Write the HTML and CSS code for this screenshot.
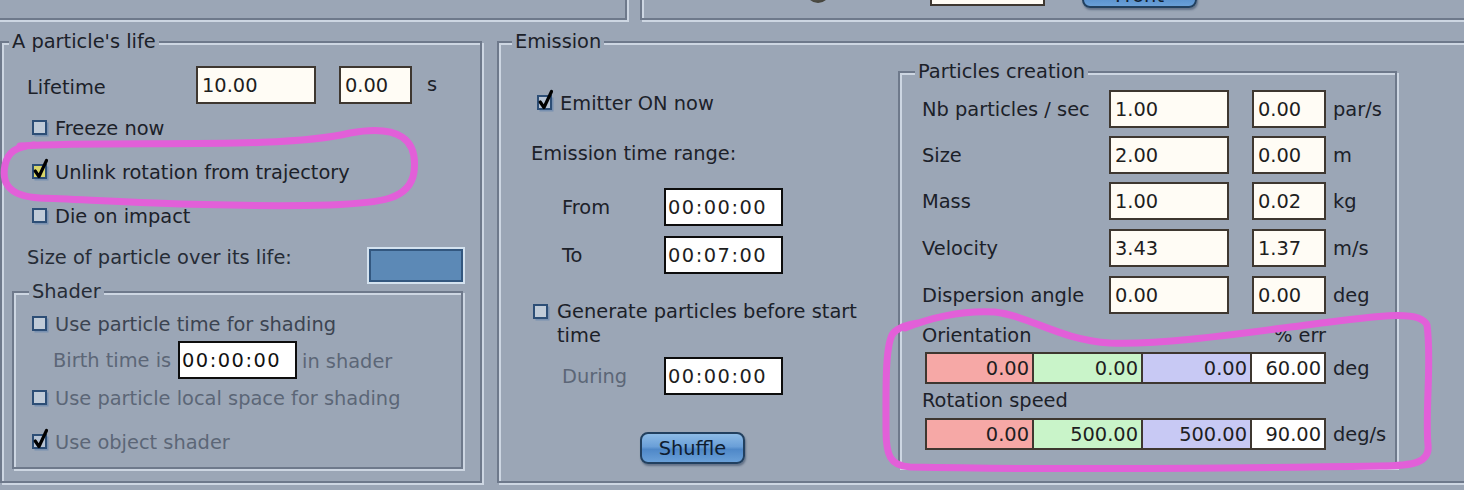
FILE: index.html
```html
<!DOCTYPE html>
<html>
<head>
<meta charset="utf-8">
<title>Particles</title>
<link rel="stylesheet" href="styles.css">
</head>
<body>
<div class="page">
<div class="topbar">
  <div class="top-left etched"></div>
  <div class="top-right etched">
    <span class="knob"></span>
    <span class="field top-field">0.00</span>
    <span class="btn front">Front</span>
  </div>
</div>

<div class="main">
  <section class="group life etched">
    <div class="legend">A particle's life</div>
    <div class="lifetime-row">
      <span class="life-lbl">Lifetime</span>
      <span class="field f-life">10.00</span>
      <span class="field f-life-err">0.00</span>
      <span class="life-unit">s</span>
    </div>
    <div class="check-row life-check first">
      <svg class="cb" width="16" height="16" viewBox="0 0 16 16"><rect x="2.5" y="2.5" width="14" height="14" fill="#7890b0"/><rect x="1" y="1" width="13" height="13" fill="#c0cbd8" stroke="#2d4e76" stroke-width="2"/></svg>
      <span>Freeze now</span>
    </div>
    <div class="check-row life-check">
      <svg class="cb" width="16" height="16" viewBox="0 0 16 16"><rect x="2.5" y="2.5" width="14" height="14" fill="#7890b0"/><rect x="1" y="1" width="13" height="13" fill="#d9d66a" stroke="#2d4e76" stroke-width="2"/><path d="M3.2 7 L7 12.5 L14.5 -3.5" fill="none" stroke="#000" stroke-width="3.2" stroke-linejoin="round" stroke-linecap="round"/></svg>
      <span>Unlink rotation from trajectory</span>
    </div>
    <div class="check-row life-check">
      <svg class="cb" width="16" height="16" viewBox="0 0 16 16"><rect x="2.5" y="2.5" width="14" height="14" fill="#7890b0"/><rect x="1" y="1" width="13" height="13" fill="#c0cbd8" stroke="#2d4e76" stroke-width="2"/></svg>
      <span>Die on impact</span>
    </div>
    <div class="size-row">
      <span class="size-lbl">Size of particle over its life:</span>
      <span class="swatch"></span>
    </div>

    <section class="group shader etched">
      <div class="legend">Shader</div>
      <div class="check-row shader-check first dim">
        <svg class="cb" width="16" height="16" viewBox="0 0 16 16"><rect x="2.5" y="2.5" width="14" height="14" fill="#7890b0"/><rect x="1" y="1" width="13" height="13" fill="#c0cbd8" stroke="#2d4e76" stroke-width="2"/></svg>
        <span>Use particle time for shading</span>
      </div>
      <div class="birth-row muted">
        <span class="birth-lbl">Birth time is</span>
        <span class="field time">00:00:00</span>
        <span class="birth-after">in shader</span>
      </div>
      <div class="check-row shader-check local muted">
        <svg class="cb" width="16" height="16" viewBox="0 0 16 16"><rect x="2.5" y="2.5" width="14" height="14" fill="#7890b0"/><rect x="1" y="1" width="13" height="13" fill="#c0cbd8" stroke="#2d4e76" stroke-width="2"/></svg>
        <span>Use particle local space for shading</span>
      </div>
      <div class="check-row shader-check object muted">
        <svg class="cb" width="16" height="16" viewBox="0 0 16 16"><rect x="2.5" y="2.5" width="14" height="14" fill="#7890b0"/><rect x="1" y="1" width="13" height="13" fill="#b6c3d4" stroke="#2d4e76" stroke-width="2"/><path d="M3.2 7 L7 12.5 L14.5 -3.5" fill="none" stroke="#000" stroke-width="3.2" stroke-linejoin="round" stroke-linecap="round"/></svg>
        <span>Use object shader</span>
      </div>
    </section>
  </section>

  <section class="group emission etched">
    <div class="legend">Emission</div>
    <div class="em-body">
      <div class="em-left">
        <div class="check-row emitter">
          <svg class="cb" width="16" height="16" viewBox="0 0 16 16"><rect x="2.5" y="2.5" width="14" height="14" fill="#7890b0"/><rect x="1" y="1" width="13" height="13" fill="#b6c3d4" stroke="#2d4e76" stroke-width="2"/><path d="M3.2 7 L7 12.5 L14.5 -3.5" fill="none" stroke="#000" stroke-width="3.2" stroke-linejoin="round" stroke-linecap="round"/></svg>
          <span>Emitter ON now</span>
        </div>
        <div class="em-range">Emission time range:</div>
        <div class="time-row from">
          <span class="time-lbl">From</span>
          <span class="field time">00:00:00</span>
        </div>
        <div class="time-row to">
          <span class="time-lbl">To</span>
          <span class="field time">00:07:00</span>
        </div>
        <div class="gen-row">
          <svg class="cb" width="16" height="16" viewBox="0 0 16 16"><rect x="2.5" y="2.5" width="14" height="14" fill="#7890b0"/><rect x="1" y="1" width="13" height="13" fill="#c0cbd8" stroke="#2d4e76" stroke-width="2"/></svg>
          <span class="gen-text">Generate particles before start time</span>
        </div>
        <div class="time-row during">
          <span class="time-lbl muted">During</span>
          <span class="field time">00:00:00</span>
        </div>
        <span class="btn shuffle">Shuffle</span>
      </div>

      <section class="group pc etched">
        <div class="legend">Particles creation</div>
        <div class="pc-row first">
          <span class="pc-lbl">Nb particles / sec</span>
          <span class="field f-main">1.00</span>
          <span class="field f-err">0.00</span>
          <span class="unit">par/s</span>
        </div>
        <div class="pc-row">
          <span class="pc-lbl">Size</span>
          <span class="field f-main">2.00</span>
          <span class="field f-err">0.00</span>
          <span class="unit">m</span>
        </div>
        <div class="pc-row">
          <span class="pc-lbl">Mass</span>
          <span class="field f-main">1.00</span>
          <span class="field f-err">0.02</span>
          <span class="unit">kg</span>
        </div>
        <div class="pc-row wide">
          <span class="pc-lbl">Velocity</span>
          <span class="field f-main">3.43</span>
          <span class="field f-err">1.37</span>
          <span class="unit">m/s</span>
        </div>
        <div class="pc-row wide">
          <span class="pc-lbl">Dispersion angle</span>
          <span class="field f-main">0.00</span>
          <span class="field f-err">0.00</span>
          <span class="unit">deg</span>
        </div>
        <div class="axis-hdr">
          <span>Orientation</span>
          <span>% err</span>
        </div>
        <div class="rgb-row">
          <div class="rgb">
            <span class="ax-x">0.00</span>
            <span class="ax-y">0.00</span>
            <span class="ax-z">0.00</span>
            <span class="ax-e">60.00</span>
          </div>
          <span class="unit">deg</span>
        </div>
        <div class="axis-hdr second">
          <span>Rotation speed</span>
        </div>
        <div class="rgb-row second">
          <div class="rgb">
            <span class="ax-x">0.00</span>
            <span class="ax-y">500.00</span>
            <span class="ax-z">500.00</span>
            <span class="ax-e">90.00</span>
          </div>
          <span class="unit">deg/s</span>
        </div>
      </section>
    </div>
  </section>
</div>

<svg class="marks" width="1464" height="490" viewBox="0 0 1464 490">
  <path d="M20 146 C120 140, 280 150, 350 133 C400 124, 418 140, 414 172 C410 200, 380 203, 330 205 C220 208, 100 200, 40 198 C5 196, 2 180, 5 165 C8 152, 15 147, 34 145"/>
  <path d="M905 328 C930 318, 960 310, 995 312 C1030 316, 1060 340, 1110 343 C1170 345, 1250 332, 1330 322 C1380 316, 1420 310, 1427 325 C1432 360, 1425 410, 1428 445 C1430 462, 1415 466, 1380 466 C1250 468, 1050 470, 910 467 C890 466, 886 455, 886 430 C886 390, 885 350, 892 335 C896 328, 905 325, 918 323"/>
</svg>
</div>
</body>
</html>
```

FILE: styles.css
```css
* { box-sizing: border-box; }

html {
  overflow: hidden;
  background: #9ba6b6;
}

body {
  margin: 0;
  background: #9ba6b6;
  font-family: "DejaVu Sans", "Liberation Sans", sans-serif;
  font-size: 19.4px;
  color: #1c2129;
}

.page {
  width: 1464px;
  height: 490px;
  overflow: hidden;
  position: relative;
}

.etched {
  border: 2px solid #6e798b;
  box-shadow: inset 2px 2px 0 #cdd6e2, 2px 2px 0 #cdd6e2;
}

/* top strip (panels cut by the window edge) */
.topbar {
  display: flex;
  height: 60px;
  margin-top: -40px;
}
.top-left {
  flex: none;
  width: 637px;
  margin-left: -10px;
}
.top-right {
  flex: none;
  width: 860px;
  margin-left: 13px;
  display: flex;
  align-items: flex-end;
  padding-left: 164px;
}
.knob {
  flex: none;
  width: 24px;
  height: 24px;
  border-radius: 50%;
  background: radial-gradient(circle at 40% 35%, #7c7b70, #46453e 70%);
  margin-bottom: 15px;
}
.top-field {
  width: 115px;
  height: 36px !important;
  margin: 0 0 12px 100px;
  align-items: flex-end !important;
  padding-bottom: 10px !important;
  color: #333;
}
.front {
  width: 115px;
  height: 32px;
  margin: 0 0 10px 37px;
  padding-top: 6px;
  background: linear-gradient(#8dbcee, #5f98da 50%, #4f8ad0 55%, #6aa4e4);
}

/* layout */
.main {
  display: flex;
  align-items: flex-start;
  margin-top: 21px;
}
.group {
  display: flex;
  flex-direction: column;
  flex: none;
}
.legend {
  align-self: flex-start;
  height: 22px;
  line-height: 22px;
  padding: 0 3px;
  margin-top: -12px;
  background: #9ba6b6;
  white-space: nowrap;
}

/* common widgets */
.field {
  flex: none;
  display: flex;
  align-items: center;
  height: 38px;
  padding: 0 4px;
  border: 2px solid #3e3730;
  background: #fffcf5;
  color: #1e1e1e;
  white-space: nowrap;
}
.field.time {
  width: 119px;
  padding: 0 2px;
  border-color: #0d0d0d;
  background: #ffffff;
  letter-spacing: 1.5px;
}
.btn {
  flex: none;
  display: flex;
  align-items: center;
  justify-content: center;
  border: 2px solid #22405f;
  border-radius: 8px;
  background: linear-gradient(#8dbbe6, #6a9fd8 45%, #4f88c8 55%, #6aa0d8);
  color: #0f1d30;
  box-shadow: 1px 2px 2px rgba(30, 50, 80, 0.45);
}
.cb {
  flex: none;
  overflow: visible;
}
.check-row {
  display: flex;
  align-items: center;
  gap: 7px;
  white-space: nowrap;
}
.muted { color: #5c6677; }
.dim { color: #3c4451; }

/* A particle's life */
.life {
  width: 482px;
  height: 442px;
}
.life > .legend { margin-left: 7px; }
.lifetime-row {
  display: flex;
  align-items: center;
  height: 38px;
  margin-top: 13px;
  padding-left: 25px;
}
.life-lbl {
  width: 169px;
  flex: none;
  padding-top: 4px;
}
.f-life { width: 120px; }
.f-life-err { width: 73px; margin-left: 23px; }
.life-unit { margin-left: 15px; margin-top: -2px; }

.life-check {
  height: 44px;
  margin-left: 30px;
}
.life-check.first { margin-top: 2px; }

.size-row {
  display: flex;
  align-items: flex-start;
  margin-top: 9px;
  padding: 0 15px 0 25px;
}
.size-lbl {
  line-height: 22px;
  color: #262c36;
}
.swatch {
  margin-left: auto;
  width: 98px;
  height: 37px;
  border: 2px solid #d4e2ef;
  background: #5c89b6;
  box-shadow: inset 0 0 0 2px #33577f;
}

/* Shader */
.shader {
  width: 451px;
  height: 178px;
  margin: 7px 0 0 10px;
}
.shader > .legend { margin-left: 15px; color: #262c36; }
.shader-check {
  height: 24px;
  margin-left: 18px;
}
.shader-check.first { margin-top: 9px; }
.shader-check.local { margin-top: 7px; }
.shader-check.object { margin-top: 20px; }
.birth-row {
  display: flex;
  align-items: center;
  height: 38px;
  margin-top: 5px;
  padding-left: 39px;
  white-space: nowrap;
}
.birth-lbl { width: 125px; flex: none; }
.birth-row .field.time { color: #111; }
.birth-after { margin-left: 5px; padding-top: 3px; }

/* Emission */
.emission {
  flex: none;
  width: 1000px;
  height: 442px;
  margin-left: 15px;
}
.emission > .legend { margin-left: 13px; }
.em-body { display: flex; }
.em-left {
  flex: none;
  width: 399px;
  display: flex;
  flex-direction: column;
  align-items: flex-start;
}
.emitter {
  height: 24px;
  margin: 38px 0 0 38px;
}
.em-range {
  line-height: 22px;
  margin: 28px 0 0 32px;
}
.time-row {
  display: flex;
  align-items: center;
  height: 38px;
  padding-left: 63px;
}
.time-row.from { margin-top: 23px; }
.time-row.to { margin-top: 10px; }
.time-row.during { margin-top: 9px; }
.time-lbl { width: 102px; flex: none; }
.gen-row {
  display: flex;
  align-items: flex-start;
  gap: 8px;
  margin: 26px 0 0 34px;
  line-height: 24px;
}
.gen-row .cb { margin-top: 4px; }
.gen-text { width: 320px; }
.shuffle {
  width: 105px;
  height: 32px;
  margin: 37px 0 0 141px;
}

/* Particles creation */
.pc {
  width: 499px;
  height: 397px;
  margin-top: 18px;
}
.pc > .legend { margin-left: 15px; }
.pc-row {
  display: flex;
  align-items: center;
  height: 38px;
  margin-top: 8px;
  padding-left: 22px;
  white-space: nowrap;
}
.pc-row.first { margin-top: 7px; }
.pc-row.wide { margin-top: 9px; }
.pc-lbl { width: 187px; flex: none; }
.f-main { width: 120px; }
.f-err { width: 74px; margin-left: 23px; }
.unit { margin-left: 7px; white-space: nowrap; }

.axis-hdr {
  display: flex;
  justify-content: space-between;
  width: 404px;
  height: 22px;
  line-height: 22px;
  margin: 11px 0 0 22px;
}
.axis-hdr.second { margin-top: 6px; }
.rgb-row {
  display: flex;
  align-items: center;
  margin: 5px 0 0 25px;
}
.rgb-row.second { margin-top: 6px; }
.rgb {
  display: grid;
  grid-template-columns: 105px 107px 107px 72px;
  gap: 2px;
  padding: 2px;
  height: 32px;
  background: #3e3730;
}
.rgb span {
  display: flex;
  align-items: center;
  justify-content: flex-end;
  padding-right: 3px;
  color: #1e1e22;
}
.ax-x { background: #f6a8a6; }
.ax-y { background: #c9f4c9; }
.ax-z { background: #c8c9f4; }
.ax-e { background: #ffffff; }

/* hand-drawn annotation marks */
.marks {
  position: absolute;
  left: 0;
  top: 0;
  pointer-events: none;
}
.marks path {
  fill: none;
  stroke: #e25fd8;
  stroke-width: 7;
  stroke-linecap: round;
  stroke-linejoin: round;
}
```
